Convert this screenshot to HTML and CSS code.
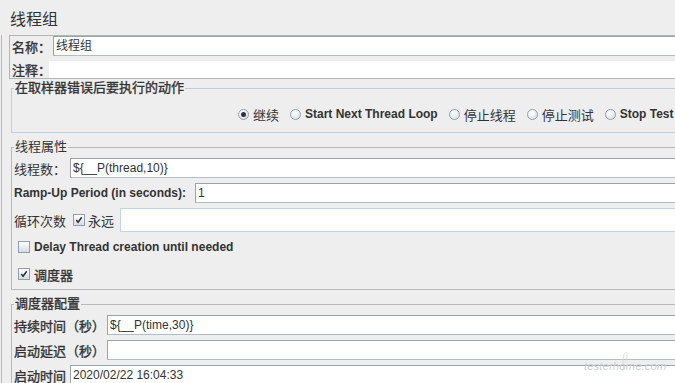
FILE: index.html
```html
<!DOCTYPE html>
<html lang="zh-CN">
<head>
    <meta charset="UTF-8">
    <title>线程组</title>
    <link rel="stylesheet" href="styles.css">
</head>
<body>
    <div class="page">
        <h1 class="title">线程组</h1>

        <div class="frame">
            <div class="name-panel">
                <div class="name-row">
                    <span class="label strong name-label">名称：</span>
                    <div class="field">线程组</div>
                </div>
                <div class="comment-row">
                    <span class="label strong comment-label">注释：</span>
                    <div class="comment-area"></div>
                </div>
            </div>

            <fieldset class="group blue error-group">
                <legend class="strong">在取样器错误后要执行的动作</legend>
                <div class="radio-row">
                    <span class="radio checked"></span><span class="option">继续</span>
                    <span class="radio"></span><span class="option bold">Start Next Thread Loop</span>
                    <span class="radio"></span><span class="option">停止线程</span>
                    <span class="radio"></span><span class="option">停止测试</span>
                    <span class="radio"></span><span class="option bold">Stop Test</span>
                </div>
            </fieldset>

            <fieldset class="group thread-group">
                <legend>线程属性</legend>
                <div class="row first">
                    <span class="label w56">线程数：</span>
                    <div class="field">${__P(thread,10)}</div>
                </div>
                <div class="row">
                    <span class="label bold ramp">Ramp-Up Period (in seconds):</span>
                    <div class="field">1</div>
                </div>
                <div class="row loop">
                    <span class="label loop-label">循环次数</span>
                    <span class="check checked"><svg viewBox="0 0 11 11"><path d="M2.5 5.5 L4.5 8 L8.5 2.5" /></svg></span>
                    <span class="check-text">永远</span>
                    <div class="field disabled"></div>
                </div>
                <div class="check-row delay">
                    <span class="check"></span>
                    <span class="check-text bold">Delay Thread creation until needed</span>
                </div>
                <div class="check-row sched">
                    <span class="check checked"><svg viewBox="0 0 11 11"><path d="M2.5 5.5 L4.5 8 L8.5 2.5" /></svg></span>
                    <span class="check-text strong">调度器</span>
                </div>
            </fieldset>

            <fieldset class="group sched-group">
                <legend class="strong">调度器配置</legend>
                <div class="row first">
                    <span class="label strong w93">持续时间（秒）</span>
                    <div class="field">${__P(time,30)}</div>
                </div>
                <div class="row">
                    <span class="label strong w93">启动延迟（秒）</span>
                    <div class="field"></div>
                </div>
                <div class="row">
                    <span class="label strong w56">启动时间</span>
                    <div class="field">2020/02/22 16:04:33</div>
                </div>
            </fieldset>
        </div>
    </div>

    <div class="watermark">
        <svg class="loop-mark" viewBox="0 0 20 26"><path d="M8 25 C6 14 8 2 11 2 C14 2 14 10 10 16" /></svg>
        <span>testerhome.com</span>
    </div>
</body>
</html>
```

FILE: styles.css
```css
body {
    margin: 0;
    background-color: #eeeeee;
    color: #333333;
    font-family: "Liberation Sans", "Noto Sans CJK SC", sans-serif;
    font-size: 12px;
    overflow: hidden;
    height: 383px;
}

.page {
    width: 760px;
}

.bold {
    font-weight: bold;
    font-size: 12px;
}

.strong {
    -webkit-text-stroke: 0.35px currentColor;
}

.title {
    margin: 0;
    padding: 8px 0 7px 10px;
    font-family: "Noto Sans CJK SC", sans-serif;
    font-size: 16px;
    font-weight: normal;
    line-height: 20px;
}

.frame {
    margin-left: 1px;
    border-left: 1px solid #b9b9b9;
    padding-left: 7px;
    padding-bottom: 20px;
}

.label, .option, .check-text, legend {
    font-family: "Liberation Sans", "Noto Sans CJK SC", sans-serif;
    font-size: 13px;
    white-space: nowrap;
}

.label.bold, .option.bold, .check-text.bold {
    font-size: 12px;
}

/* name / comment block */
.name-panel {
    border: 1px solid #b4b4b4;
    border-right: none;
}

.name-row {
    display: flex;
    align-items: center;
    height: 20px;
}

.name-label {
    width: 41px;
    padding-left: 2px;
}

.comment-row {
    display: flex;
    align-items: center;
    margin-top: 5px;
    height: 17px;
}

.comment-label {
    width: 37px;
    padding-left: 2px;
}

.comment-area {
    flex: 1;
    height: 17px;
    background-color: #ffffff;
}

.field {
    flex: 1;
    height: 18px;
    line-height: 18px;
    background-color: #ffffff;
    border: 1px solid #9aa4af;
    border-bottom-color: #b3bdc8;
    padding-left: 2px;
    font-family: "Liberation Sans", "Noto Sans CJK SC", sans-serif;
    font-size: 12px;
    color: #333333;
    white-space: nowrap;
}

.field.disabled {
    height: 22px;
    border-color: #c3d4e6;
}

/* titled groups */
.group {
    margin: 0 0 0 2px;
    padding: 0 0 0 2px;
    border: 1px solid #b9b9b9;
    border-right: none;
    min-width: 0;
}

.group.blue {
    border-color: #b8cfe5;
}

.group legend {
    padding: 0 1px;
    line-height: 16px;
}

.error-group {
    margin-top: 1px;
}

.thread-group {
    margin-top: 6px;
}

.sched-group {
    margin-top: 6px;
}

.radio-row {
    display: flex;
    align-items: center;
    height: 16px;
    margin: 10px 0 10px;
    padding-left: 224px;
}

.radio {
    width: 9px;
    height: 9px;
    border: 1px solid #8e9fb3;
    border-radius: 50%;
    background: radial-gradient(circle at 40% 35%, #ffffff 0%, #e9eef4 50%, #c9d4e0 100%);
    margin-right: 4px;
    position: relative;
    flex: none;
}

.radio.checked::after {
    content: "";
    position: absolute;
    left: 2px;
    top: 2px;
    width: 5px;
    height: 5px;
    border-radius: 50%;
    background-color: #333333;
}

.option {
    margin-right: 11px;
}

/* rows of the groups */
.row {
    display: flex;
    align-items: center;
    height: 20px;
    margin-top: 5px;
}

.row.first {
    margin-top: 3px;
}

.row.loop {
    height: 24px;
}

.w56 {
    width: 56px;
    flex: none;
}

.w93 {
    width: 93px;
    flex: none;
}

.ramp {
    width: 181px;
    flex: none;
}

.loop-label {
    width: 59px;
    flex: none;
}

.check {
    width: 10px;
    height: 10px;
    border: 1px solid #8e9fb3;
    background: linear-gradient(#ffffff, #d3dce6);
    flex: none;
    display: inline-flex;
}

.check svg {
    width: 10px;
    height: 10px;
}

.check svg path {
    fill: none;
    stroke: #2b2b2b;
    stroke-width: 1.6;
}

.loop .check-text {
    margin-left: 3px;
    width: 32px;
}

.check-row {
    display: flex;
    align-items: center;
    gap: 4px;
    height: 16px;
    padding-left: 4px;
}

.check-row.delay {
    margin-top: 7px;
}

.check-row.sched {
    margin-top: 11px;
    margin-bottom: 7px;
}

.watermark {
    position: absolute;
    left: 584px;
    top: 348px;
    color: #d2d2d2;
    font-family: "Liberation Sans", sans-serif;
    font-size: 11.5px;
    font-style: italic;
}

.watermark span {
    position: absolute;
    top: 12px;
    left: 0;
    white-space: nowrap;
}

.loop-mark {
    position: absolute;
    left: 34px;
    top: 0;
    width: 14px;
    height: 24px;
}

.loop-mark path {
    fill: none;
    stroke: #d2d2d2;
    stroke-width: 1;
}
```
